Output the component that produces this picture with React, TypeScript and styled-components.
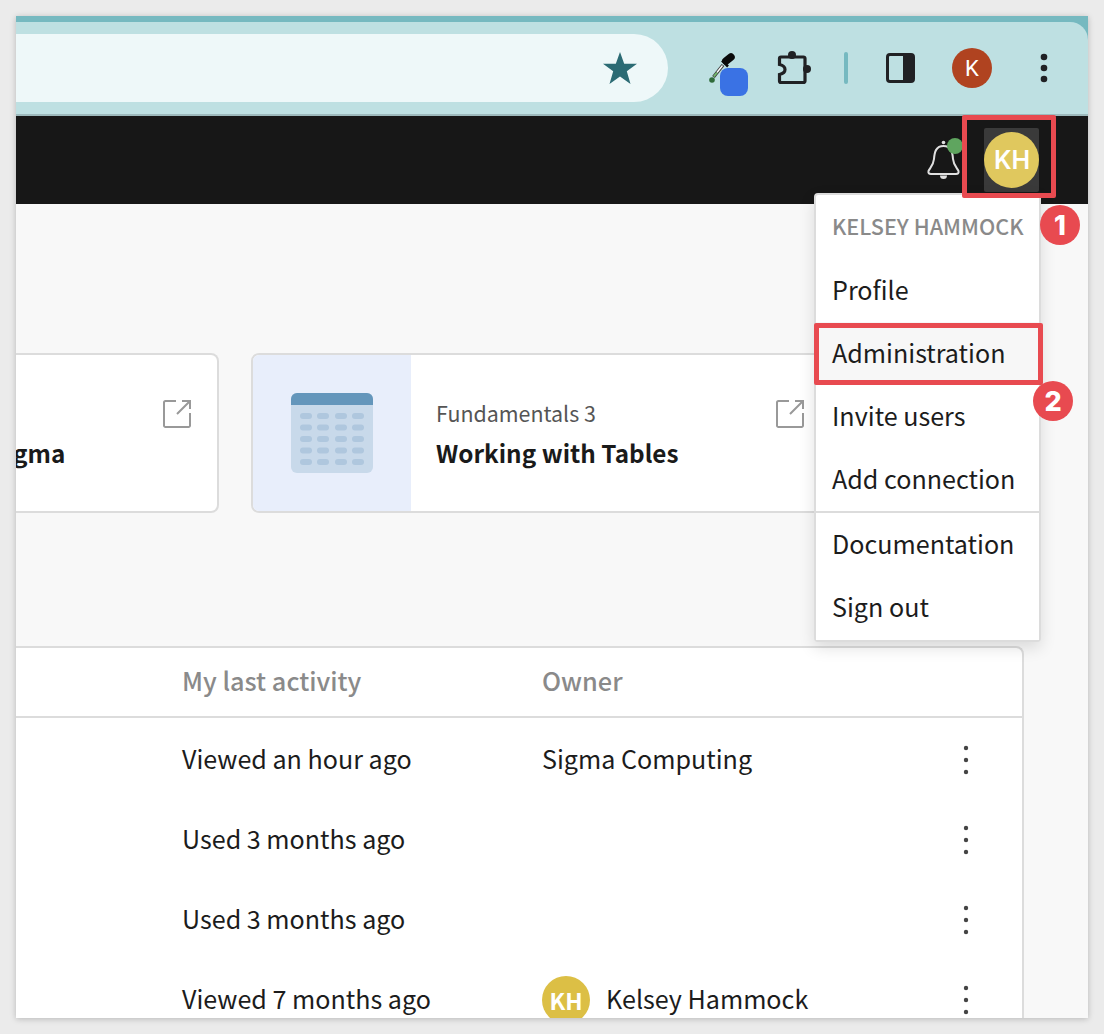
import React from 'react'
import styled, { createGlobalStyle } from 'styled-components'

const sans = `"Noto Sans CJK SC", "Noto Sans", sans-serif`

const GlobalStyle = createGlobalStyle`
  html, body {
    margin: 0;
    padding: 0;
    background: #ebebeb;
    font-family: ${sans};
  }
`

const Frame = styled.div`
  width: 1104px;
  height: 1034px;
  padding: 16px;
  box-sizing: border-box;
  overflow: hidden;
`

const Window = styled.div`
  position: relative;
  width: 1072px;
  height: 1002px;
  display: flex;
  flex-direction: column;
  overflow: hidden;
  box-shadow: 0 1px 6px rgba(0, 0, 0, 0.22);
`

const ChromeTop = styled.div`
  background: #76b9c0;
  padding-top: 6px;
  flex: none;
`

const Toolbar = styled.div`
  height: 92px;
  background: #bee0e2;
  border-top-right-radius: 18px;
  display: flex;
  align-items: center;
`

const Omnibox = styled.div`
  width: 652px;
  height: 68px;
  box-sizing: border-box;
  padding-right: 31px;
  background: #eef8f9;
  border-radius: 0 34px 34px 0;
  display: flex;
  align-items: center;
  justify-content: flex-end;
`

const ToolSlot = styled.div<{ $gap: number }>`
  margin-left: ${(p) => p.$gap}px;
  display: flex;
  flex: none;
`

const DropperSlot = styled(ToolSlot)`
  position: relative;
  width: 39px;
  height: 43px;
  margin-top: 13px;
`

const BlueBadge = styled.span`
  position: absolute;
  left: 11px;
  top: 15px;
  width: 28px;
  height: 28px;
  border-radius: 8px;
  background: #3a72e4;
`

const Separator = styled(ToolSlot)`
  width: 4px;
  height: 32px;
  border-radius: 2px;
  background: #76b9c0;
`

const ChromeAvatar = styled(ToolSlot)`
  width: 40px;
  height: 40px;
  border-radius: 50%;
  background: #b04320;
  color: #fff;
  font: 400 22px Roboto, sans-serif;
  align-items: center;
  justify-content: center;
`

const NavBar = styled.div`
  height: 88px;
  flex: none;
  border-top: 2px solid #9db9bc;
  background: #171717;
  padding-right: 49px;
  display: flex;
  align-items: center;
  justify-content: flex-end;
  gap: 24px;
`

const BellWrap = styled.div`
  position: relative;
  width: 33px;
  height: 40px;
`

const BellDot = styled.span`
  position: absolute;
  left: 20px;
  top: -2px;
  width: 16px;
  height: 16px;
  border-radius: 50%;
  background: #5fa55f;
`

const AvatarHover = styled.div`
  width: 55px;
  height: 64px;
  border-radius: 2px;
  background: #3a3a3a;
  display: flex;
  align-items: center;
`

const NavAvatar = styled.div`
  width: 55px;
  height: 56px;
  border-radius: 50%;
  background: #e0c85e;
  color: #fff;
  font: 600 25px Inter, sans-serif;
  padding-left: 1px;
  box-sizing: border-box;
  display: flex;
  align-items: center;
  justify-content: center;
`

const Page = styled.main`
  flex: 1;
  min-height: 0;
  background: #f8f8f8;
  padding-top: 149px;
`

const CardRow = styled.div`
  display: flex;
  gap: 32px;
  height: 160px;
`

const Card = styled.div<{ $width: number }>`
  position: relative;
  width: ${(p) => p.$width}px;
  box-sizing: border-box;
  background: #fff;
  border: 2px solid #dcdcdc;
  border-left: none;
  border-radius: 0 8px 8px 0;
  display: flex;
  overflow: hidden;
`

const LinkedCard = styled(Card)`
  border-left: 2px solid #dcdcdc;
  border-radius: 8px;
`

const CardArt = styled.div`
  width: 158px;
  flex: none;
  background: #e8eefb;
  display: flex;
  align-items: center;
  justify-content: center;
`

const CardText = styled.div`
  flex: 1;
  padding: 44px 0 0 25px;
`

const CutCardText = styled(CardText)`
  padding: 82px 0 0 0;
  margin-left: -3px;
`

const Eyebrow = styled.div`
  font-size: 21.4px;
  line-height: 28px;
  color: #555;
`

const CardTitle = styled.div`
  margin-top: 10px;
  font-size: 24.3px;
  line-height: 32px;
  font-weight: 700;
  color: #1a1a1a;
`

const CutTitle = styled(CardTitle)`
  margin-top: 0;
`

const OpenIcon = styled.svg`
  position: absolute;
  right: 25px;
  top: 44px;
  width: 30px;
  height: 30px;
`

const Table = styled.section`
  margin-top: 133px;
  width: 1008px;
  height: 500px;
  box-sizing: border-box;
  background: #fff;
  border-top: 2px solid #dcdcdc;
  border-right: 2px solid #dcdcdc;
  border-top-right-radius: 8px;
`

const gridColumns = `166px 360px 1fr 30px`

const HeadRow = styled.div`
  height: 68px;
  box-sizing: content-box;
  padding-right: 41px;
  border-bottom: 2px solid #dcdcdc;
  display: grid;
  grid-template-columns: ${gridColumns};
  align-items: center;
  color: #8a8a8a;
  font-size: 25.3px;
  line-height: 30px;
  font-weight: 500;
`

const TableBody = styled.div`
  padding-top: 2px;
`

const Row = styled.div`
  height: 80px;
  padding-right: 41px;
  display: grid;
  grid-template-columns: ${gridColumns};
  align-items: center;
  color: #1c1c1c;
  font-size: 25.1px;
  line-height: 30px;
`

const Cell = styled.span`
  padding-bottom: 4px;
`

const Owner = styled.div`
  display: flex;
  align-items: center;
  gap: 16px;
`

const OwnerAvatar = styled.span`
  width: 48px;
  height: 48px;
  border-radius: 50%;
  background: #dcbf45;
  color: #fff;
  font-size: 23px;
  font-weight: 700;
  display: flex;
  align-items: center;
  justify-content: center;
`

const Kebab = styled.svg`
  width: 30px;
  height: 36px;
  display: block;
`

const Menu = styled.nav`
  position: absolute;
  left: 798px;
  top: 177px;
  width: 227px;
  box-sizing: border-box;
  background: #fff;
  border: 2px solid #dcdcdc;
  border-radius: 4px;
  box-shadow: 0 6px 16px rgba(0, 0, 0, 0.12);
`

const MenuHeader = styled.div`
  height: 64px;
  box-sizing: border-box;
  padding: 0 0 3px 16px;
  display: flex;
  align-items: center;
  color: #8a8a8a;
  font-size: 21.6px;
  font-weight: 500;
  white-space: nowrap;
`

const MenuItem = styled.div<{ $active?: boolean }>`
  height: 63.1px;
  box-sizing: border-box;
  padding: 0 0 4px 16px;
  display: flex;
  align-items: center;
  background: ${(p) => (p.$active ? '#f7f7f7' : '#fff')};
  color: #1c1c1c;
  font-size: 25.1px;
  white-space: nowrap;
`

const MenuDivider = styled.div`
  height: 2px;
  background: #dcdcdc;
`

const Callout = styled.div<{ $left: number; $top: number; $width: number; $height: number }>`
  position: absolute;
  left: ${(p) => p.$left}px;
  top: ${(p) => p.$top}px;
  width: ${(p) => p.$width}px;
  height: ${(p) => p.$height}px;
  box-sizing: border-box;
  border: 5.5px solid #e84a50;
  border-radius: 2px;
`

const StepBadge = styled.div<{ $left: number; $top: number }>`
  position: absolute;
  left: ${(p) => p.$left}px;
  top: ${(p) => p.$top}px;
  width: 40px;
  height: 40px;
  border-radius: 50%;
  background: #e84a50;
  color: #fff;
  font: 800 27px Inter, sans-serif;
  display: flex;
  align-items: center;
  justify-content: center;
`

const rows = [
  { activity: 'Viewed an hour ago', owner: 'Sigma Computing' },
  { activity: 'Used 3 months ago' },
  { activity: 'Used 3 months ago' },
  { activity: 'Viewed 7 months ago', owner: 'Kelsey Hammock', avatar: 'KH' },
]

const OpenLink = () => (
  <OpenIcon viewBox="0 0 30 30" fill="none" stroke="#999" strokeWidth="2">
    <path d="M14 2H3.500A1.500 1.500 0 0 0 2 3.500V26.500A1.500 1.500 0 0 0 3.500 28H26.500A1.500 1.500 0 0 0 28 26.500V14" />
    <path d="M15 15L28 2M20 2H28V10" />
  </OpenIcon>
)

const TableArt = () => (
  <svg width="82" height="80" viewBox="0 0 82 80">
    <rect width="82" height="80" rx="6" fill="#c8d9ea" />
    <path d="M0 12V6A6 6 0 0 1 6 0H76A6 6 0 0 1 82 6V12Z" fill="#6496bb" />
    {[20, 31.5, 43, 54.5, 66].map((y) =>
      [9, 26, 44, 61].map((x) => <rect key={`${x}-${y}`} x={x} y={y} width="12" height="6" rx="3" fill="#afc7de" />),
    )}
  </svg>
)

export default function App() {
  return (
    <Frame>
      <GlobalStyle />
      <Window>
        <ChromeTop>
          <Toolbar>
            <Omnibox>
              <svg width="34" height="32" viewBox="0 0 34 32">
                <path d="M17 0L21.200 11.800H34L23.800 19.300L27.500 32L17 24.500L6.500 32L10.200 19.300L0 11.800H12.800Z" fill="#2b6b74" />
              </svg>
            </Omnibox>
            <DropperSlot $gap={41}>
              <svg width="27" height="31" viewBox="0 0 27 31">
                <path d="M17 8L22 4" stroke="#0b0b0b" strokeWidth="7.500" strokeLinecap="round" />
                <path d="M13 7.500L19 13.500" stroke="#0b0b0b" strokeWidth="2.500" />
                <path d="M14 12L4.500 24" stroke="#3c3c3c" strokeWidth="3.400" />
                <path d="M13.500 12.500L8 19.500" stroke="#fff" strokeWidth="1.400" />
                <path d="M8 19.500L4.800 23.500" stroke="#74bb6e" strokeWidth="2" />
                <circle cx="3" cy="27" r="2.800" fill="#2f6b3a" />
              </svg>
              <BlueBadge />
            </DropperSlot>
            <ToolSlot $gap={29}>
              <svg width="34" height="34" viewBox="0 0 34 34" fill="none">
                <circle cx="15" cy="4" r="4" fill="#202124" />
                <circle cx="30" cy="18" r="4" fill="#202124" />
                <path
                  d="M4 6H26.500A1.500 1.500 0 0 1 28 7.500V30A1.500 1.500 0 0 1 26.500 31.500H4A1.500 1.500 0 0 1 2.500 30V23.500C7 22.500 8 20 8 18.500C8 17 7 14.500 2.500 13.500V7.500A1.500 1.500 0 0 1 4 6Z"
                  stroke="#202124"
                  strokeWidth="3.200"
                />
              </svg>
            </ToolSlot>
            <Separator $gap={33} />
            <ToolSlot $gap={38}>
              <svg width="29" height="30" viewBox="0 0 29 30">
                <rect x="1.500" y="1.500" width="26" height="27" rx="2.500" fill="none" stroke="#202124" strokeWidth="3" />
                <rect x="17" y="1.500" width="10.500" height="27" fill="#202124" />
              </svg>
            </ToolSlot>
            <ChromeAvatar $gap={37}>K</ChromeAvatar>
            <ToolSlot $gap={48}>
              <svg width="8" height="30" viewBox="0 0 8 30" fill="#202124">
                <circle cx="4" cy="4" r="3.300" />
                <circle cx="4" cy="15" r="3.300" />
                <circle cx="4" cy="26" r="3.300" />
              </svg>
            </ToolSlot>
          </Toolbar>
        </ChromeTop>
        <NavBar>
          <BellWrap>
            <svg width="33" height="40" viewBox="0 0 33 40" fill="none" stroke="#e0e0e0" strokeWidth="2">
              <path d="M16.500 6C9 6 7.500 12 7 19C6.500 25 3 28 1.500 31C1 33 2 34 4 34H29C31 34 32 33 31.500 31C30 28 26.500 25 26 19C25.500 12 24 6 16.500 6Z" />
              <circle cx="16.500" cy="2.500" r="1.800" fill="#e0e0e0" stroke="none" />
              <path d="M13 35.500A3.500 3.500 0 0 0 20 35.500Z" fill="#e0e0e0" stroke="none" />
            </svg>
            <BellDot />
          </BellWrap>
          <AvatarHover>
            <NavAvatar>KH</NavAvatar>
          </AvatarHover>
        </NavBar>
        <Page>
          <CardRow>
            <Card $width={203}>
              <CutCardText>
                <CutTitle>gma</CutTitle>
              </CutCardText>
              <OpenLink />
            </Card>
            <LinkedCard $width={581}>
              <CardArt>
                <TableArt />
              </CardArt>
              <CardText>
                <Eyebrow>Fundamentals 3</Eyebrow>
                <CardTitle>Working with Tables</CardTitle>
              </CardText>
              <OpenLink />
            </LinkedCard>
          </CardRow>
          <Table>
            <HeadRow>
              <span />
              <Cell>My last activity</Cell>
              <Cell>Owner</Cell>
            </HeadRow>
            <TableBody>
              {rows.map((row, i) => (
                <Row key={i}>
                  <span />
                  <Cell>{row.activity}</Cell>
                  <Owner>
                    {row.avatar && <OwnerAvatar>{row.avatar}</OwnerAvatar>}
                    {row.owner && <Cell>{row.owner}</Cell>}
                  </Owner>
                  <Kebab viewBox="0 0 30 36" fill="#444">
                    <circle cx="15" cy="6" r="2.200" />
                    <circle cx="15" cy="18" r="2.200" />
                    <circle cx="15" cy="30" r="2.200" />
                  </Kebab>
                </Row>
              ))}
            </TableBody>
          </Table>
        </Page>
        <Menu>
          <MenuHeader>KELSEY HAMMOCK</MenuHeader>
          <MenuItem>Profile</MenuItem>
          <MenuItem $active>Administration</MenuItem>
          <MenuItem>Invite users</MenuItem>
          <MenuItem>Add connection</MenuItem>
          <MenuDivider />
          <MenuItem>Documentation</MenuItem>
          <MenuItem>Sign out</MenuItem>
        </Menu>
        <Callout $left={946} $top={99} $width={94} $height={83} />
        <Callout $left={798} $top={307} $width={229} $height={62} />
        <StepBadge $left={1024} $top={189}>1</StepBadge>
        <StepBadge $left={1017} $top={365}>2</StepBadge>
      </Window>
    </Frame>
  )
}
